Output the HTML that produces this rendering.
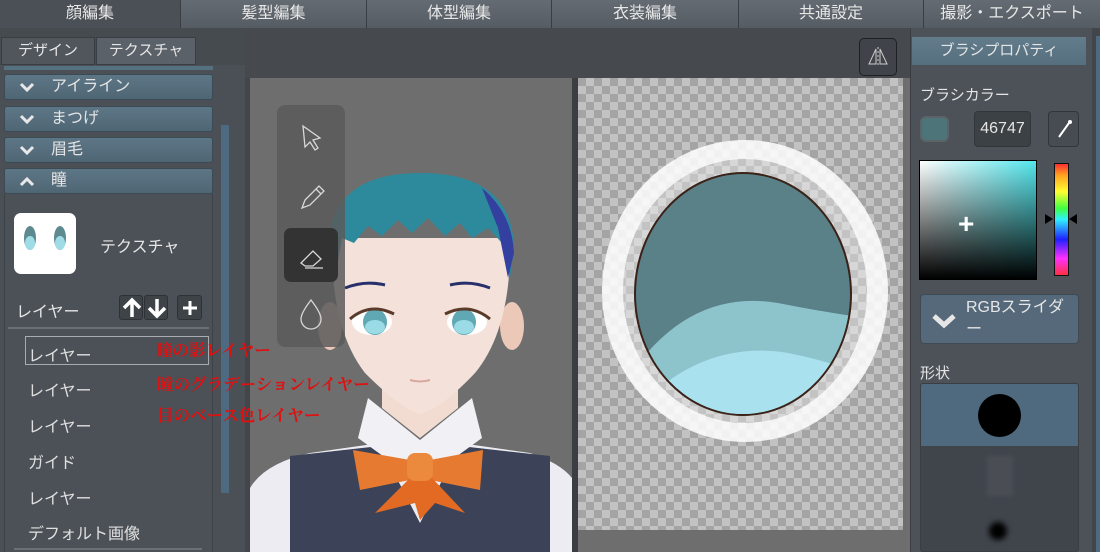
<!DOCTYPE html>
<html><head><meta charset="utf-8"><style>
*{margin:0;padding:0;box-sizing:border-box}
body{width:1100px;height:552px;overflow:hidden;background:#42464b;font-family:"Liberation Sans","Noto Sans CJK JP",sans-serif;color:#e6e6e6;position:relative}
.a{position:absolute}
.tab{position:absolute;top:0;height:28px;background:linear-gradient(#646b72,#565c63);border-right:1px solid #3a3e42;text-align:center;font-size:16px;line-height:28px;color:#e8e8e8}
.sec{position:absolute;left:4px;width:209px;height:26px;background:linear-gradient(#5d7686,#4f6674);border:1px solid #3b4a54;border-radius:3px;font-size:16px;line-height:24px;color:#e4e4e4}
.sec svg{position:absolute;left:14px;top:7px}
.sec span{position:absolute;left:46px}
.li{position:absolute;left:28px;font-size:16px;color:#e0e0e0}
.red{position:absolute;font-size:16.5px;line-height:18px;color:#e01010;font-weight:bold;font-family:"Liberation Serif","Noto Serif CJK SC",serif;white-space:nowrap}
</style></head><body>
<div class="tab" style="left:0;width:181px;background:#4b5056">顔編集</div>
<div class="tab" style="left:181px;width:186px">髪型編集</div>
<div class="tab" style="left:367px;width:185px">体型編集</div>
<div class="tab" style="left:552px;width:187px">衣装編集</div>
<div class="tab" style="left:739px;width:185px">共通設定</div>
<div class="tab" style="left:924px;width:176px;border-right:0">撮影・エクスポート</div>

<div class="a" style="left:0;top:28px;width:245px;height:524px;background:#464b50"></div>
<div class="a" style="left:1px;top:37px;width:94px;height:28px;background:#50565c;border:1px solid #3a3e42;font-size:15px;line-height:26px;text-align:center">デザイン</div>
<div class="a" style="left:96px;top:37px;width:100px;height:28px;background:#5a6168;border:1px solid #3a3e42;font-size:15px;line-height:26px;text-align:center">テクスチャ</div>
<div class="a" style="left:0;top:65px;width:245px;height:487px;background:#4a5056"></div>
<div class="a" style="left:4px;top:66px;width:209px;height:4px;background:#55707f"></div>
<div class="a" style="left:221px;top:125px;width:8px;height:368px;background:#4e6a80"></div>
<div class="sec" style="top:74px"><svg width="16" height="12"><path d="M2 2l6 6 6-6" stroke="#e8e8e8" stroke-width="3" fill="none"/></svg><span>アイライン</span></div>
<div class="sec" style="top:106px"><svg width="16" height="12"><path d="M2 2l6 6 6-6" stroke="#e8e8e8" stroke-width="3" fill="none"/></svg><span>まつげ</span></div>
<div class="sec" style="top:137px"><svg width="16" height="12"><path d="M2 2l6 6 6-6" stroke="#e8e8e8" stroke-width="3" fill="none"/></svg><span>眉毛</span></div>
<div class="sec" style="top:168px"><svg width="16" height="12"><path d="M2 9l6-6 6 6" stroke="#e8e8e8" stroke-width="3" fill="none"/></svg><span>瞳</span></div>
<div class="a" style="left:4px;top:194px;width:209px;height:358px;border-left:1px solid #3d4247;border-right:1px solid #3d4247;background:#4b5157"></div>
<div class="a" style="left:14px;top:213px;width:62px;height:61px;background:#fff;border-radius:7px">
<svg width="62" height="61"><ellipse cx="16" cy="25" rx="6" ry="12" fill="#5d8a8f"/><ellipse cx="16" cy="30" rx="5" ry="7" fill="#9fdce6"/><ellipse cx="46" cy="25" rx="6" ry="12" fill="#5d8a8f"/><ellipse cx="46" cy="30" rx="5" ry="7" fill="#9fdce6"/></svg></div>
<div class="a" style="left:100px;top:233px;font-size:16px">テクスチャ</div>
<div class="a" style="left:16px;top:298px;font-size:16px">レイヤー</div>
<div class="a" style="left:119px;top:295px;width:24px;height:25px;background:#3e4348;border:1px solid #2e3236;border-radius:3px"><svg width="24" height="24"><path d="M12 21V5M4 12l8-8 8 8" stroke="#fff" stroke-width="3.5" fill="none"/></svg></div>
<div class="a" style="left:144px;top:295px;width:24px;height:25px;background:#3e4348;border:1px solid #2e3236;border-radius:3px"><svg width="24" height="24"><path d="M12 3v16M4 12l8 8 8-8" stroke="#fff" stroke-width="3.5" fill="none"/></svg></div>
<div class="a" style="left:177px;top:295px;width:25px;height:25px;background:#3e4348;border:1px solid #2e3236;border-radius:3px"><svg width="24" height="24"><path d="M12 5v14M5 12h14" stroke="#fff" stroke-width="3" fill="none"/></svg></div>
<div class="a" style="left:8px;top:327px;width:201px;height:2px;background:#6a7076"></div>
<div class="a" style="left:25px;top:336px;width:184px;height:29px;border:1px solid #a8acb0"></div>
<div class="li" style="top:342px">レイヤー</div>
<div class="li" style="top:377px">レイヤー</div>
<div class="li" style="top:413px">レイヤー</div>
<div class="li" style="top:449px">ガイド</div>
<div class="li" style="top:485px">レイヤー</div>
<div class="li" style="top:520px">デフォルト画像</div>
<div class="a" style="left:14px;top:548px;width:188px;height:2px;background:#6a7076"></div>

<div class="a" style="left:245px;top:28px;width:665px;height:50px;background:#464a4f"></div>
<div class="a" style="left:859px;top:38px;width:38px;height:38px;border:1.5px solid #1e2124;border-radius:5px;background:#40444a"><svg width="36" height="36"><path d="M16 10L9 25h7zM20 10l7 15h-7z" stroke="#ccc" stroke-width="1" fill="none"/><path d="M18 8v20" stroke="#ccc" stroke-dasharray="2 2"/></svg></div>

<svg class="a" style="left:250px;top:78px" width="322" height="474">
<rect width="322" height="474" fill="#6e6e6e"/>
<!-- shirt/body -->
<path d="M0 474V410Q15 385 60 375L130 365 210 365 280 375Q310 385 322 400V474Z" fill="#ececf2"/>
<path d="M40 474V378L130 368 170 445 210 368 300 378V474Z" fill="#3c4358"/>
<path d="M118 320L170 362 222 320 232 360 170 405 108 360Z" fill="#f0f0f5"/>
<!-- neck -->
<path d="M132 290H208V330L170 360 132 330Z" fill="#f2dcd2"/>
<!-- bow -->
<path d="M103 372L160 382 170 392 180 382 233 372 230 412 180 402 160 402 110 412Z" fill="#e67a30"/>
<path d="M160 400L125 435 165 425 170 442 185 425 215 435 182 400Z" fill="#e26a22"/>
<rect x="157" y="375" width="26" height="28" rx="8" fill="#eb8a3c"/>
<!-- ears -->
<ellipse cx="80" cy="248" rx="12" ry="24" fill="#ecc8b8"/>
<ellipse cx="262" cy="248" rx="12" ry="24" fill="#ecc8b8"/>
<!-- face -->
<path d="M82 160Q80 250 115 295Q150 330 170 336Q192 330 225 295Q262 250 260 160Z" fill="#f4e2da"/>
<!-- hair -->
<path d="M78 170Q80 95 170 95Q262 95 264 170L260 200 252 165 238 150 222 160 210 145 195 158 178 140 162 155 148 142 132 158 118 148 104 165 92 160 84 205Z" fill="#2d8a9c"/>
<path d="M232 110Q262 135 264 175L258 200 248 150Z" fill="#3440a0"/>
<!-- brows -->
<path d="M95 210Q115 202 135 207" stroke="#27306a" stroke-width="3" fill="none"/>
<path d="M200 207Q220 202 240 210" stroke="#27306a" stroke-width="3" fill="none"/>
<!-- eyes -->
<ellipse cx="122" cy="244" rx="20" ry="13" fill="#fff"/><ellipse cx="125" cy="244" rx="12" ry="13" fill="#5fa8b4"/><ellipse cx="125" cy="249" rx="10" ry="7" fill="#9adbe6"/>
<path d="M100 241Q120 224 144 236" stroke="#5a3a2a" stroke-width="3" fill="none"/>
<ellipse cx="217" cy="244" rx="20" ry="13" fill="#fff"/><ellipse cx="214" cy="244" rx="12" ry="13" fill="#5fa8b4"/><ellipse cx="214" cy="249" rx="10" ry="7" fill="#9adbe6"/>
<path d="M195 236Q219 224 240 241" stroke="#5a3a2a" stroke-width="3" fill="none"/>
<path d="M160 302Q170 305 180 302" stroke="#d8a8a0" stroke-width="2" fill="none"/>
<!-- toolbar -->
<rect x="27" y="27" width="68" height="242" rx="8" fill="#5a5a5a" fill-opacity="0.85"/>
<rect x="34" y="150" width="54" height="54" rx="7" fill="#333"/>
<path d="M53 48l17 12-7 2 5 8-3 2-5-8-5 5z" stroke="#d8d8d8" stroke-width="1.3" fill="none"/>
<path d="M52 130l3-8 14-14 5 5-14 14zM66 111l5 5" stroke="#d8d8d8" stroke-width="1.3" fill="none"/>
<path d="M51 185l12-12 8 8-8 7h-8zM55 190h18" stroke="#d8d8d8" stroke-width="1.3" fill="none"/>
<path d="M61 222q-10 13-10 19a10 10 0 0 0 20 0q0-6-10-19z" stroke="#d8d8d8" stroke-width="1.3" fill="none"/>
</svg>
<div class="red" style="left:156px;top:342px">瞳の影レイヤー</div>
<div class="red" style="left:157px;top:376px">瞳のグラデーションレイヤー</div>
<div class="red" style="left:157px;top:407px">目のベース色レイヤー</div>

<div class="a" style="left:572px;top:78px;width:6px;height:474px;background:#3a3e42"></div>

<svg class="a" style="left:578px;top:78px" width="332" height="474">
<defs><pattern id="ck" width="16" height="16" patternUnits="userSpaceOnUse"><rect width="16" height="16" fill="#c2c2c2"/><rect width="8" height="8" fill="#a4a4a4"/><rect x="8" y="8" width="8" height="8" fill="#a4a4a4"/></pattern>
<clipPath id="ir"><ellipse cx="165" cy="216" rx="107" ry="120"/></clipPath></defs>
<rect width="332" height="474" fill="#6e6e6e"/>
<rect width="325" height="452" fill="url(#ck)"/>
<ellipse cx="167" cy="213" rx="143" ry="151" fill="#fff" fill-opacity="0.85"/>
<ellipse cx="167" cy="213" rx="122" ry="132" fill="url(#ck)" fill-opacity="0.6"/>
<ellipse cx="165" cy="216" rx="109" ry="122" fill="#3a2218"/>
<g clip-path="url(#ir)">
<rect x="50" y="90" width="240" height="260" fill="#5a8088"/>
<path d="M50 300Q110 210 200 225 250 235 290 240V350H50Z" fill="#8dc4cc"/>
<path d="M50 340Q120 260 210 275 260 285 290 300V350H50Z" fill="#a9e1ef"/>
</g>
</svg>

<div class="a" style="left:910px;top:28px;width:182px;height:524px;background:#4c5258;border-left:1px solid #3a3e42"></div>
<div class="a" style="left:1092px;top:28px;width:8px;height:524px;background:#42464b"></div>
<div class="a" style="left:1096px;top:36px;width:4px;height:516px;background:#4e6a80"></div>
<div class="a" style="left:912px;top:37px;width:174px;height:28px;background:linear-gradient(#627c8c,#566f7e);text-align:center;font-size:15px;line-height:28px">ブラシプロパティ</div>
<div class="a" style="left:920px;top:84px;font-size:15px">ブラシカラー</div>
<div class="a" style="left:920px;top:116px;width:29px;height:26px;background:#4d7478;border:2px solid #5c6468;border-radius:6px"></div>
<div class="a" style="left:974px;top:111px;width:57px;height:36px;background:#3c4146;border:1px solid #32363a;border-radius:4px;font-size:16px;line-height:34px;text-align:center">46747</div>
<div class="a" style="left:1048px;top:111px;width:31px;height:36px;background:#474c52;border:1px solid #32363a;border-radius:4px"><svg width="30" height="34"><path d="M10 25l10-14" stroke="#fff" stroke-width="2"/><circle cx="21" cy="10" r="2" fill="#fff"/></svg></div>
<div class="a" style="left:919px;top:160px;width:118px;height:120px;border:1.5px solid #000;background:linear-gradient(to top,#000,rgba(0,0,0,0)),linear-gradient(to right,#fff,#53e6ec)"></div>
<div class="a" style="left:958px;top:212px;font-size:28px;color:#fff;line-height:24px;font-weight:bold">+</div>
<div class="a" style="left:1054px;top:163px;width:15px;height:113px;border:1px solid #111;background:linear-gradient(#ff3030,#ffa020 10%,#ffff30 25%,#40ff40 40%,#30f0ff 50%,#2020ff 68%,#ff30ff 85%,#ff3040)"></div>
<div class="a" style="left:1045px;top:214px;width:0;height:0;border-left:8px solid #000;border-top:5px solid transparent;border-bottom:5px solid transparent"></div>
<div class="a" style="left:1069px;top:214px;width:0;height:0;border-right:8px solid #000;border-top:5px solid transparent;border-bottom:5px solid transparent"></div>
<div class="a" style="left:920px;top:294px;width:159px;height:50px;background:#55697a;border:1px solid #3d4a54;border-radius:4px">
<svg class="a" style="left:9px;top:16px" width="28" height="20"><path d="M4 5l10 9 10-9" stroke="#e6e6e6" stroke-width="5" fill="none"/></svg>
<div class="a" style="left:45px;top:2px;font-size:16px;line-height:22px">RGBスライダ<br>ー</div></div>
<div class="a" style="left:920px;top:362px;font-size:15px">形状</div>
<div class="a" style="left:920px;top:383px;width:159px;height:169px;background:#40454c;border:1px solid #3a3e42;border-radius:3px;overflow:hidden">
<div style="height:62px;background:#4f6a7e;position:relative"><div class="a" style="left:57px;top:10px;width:43px;height:43px;border-radius:50%;background:#000"></div></div>
<div class="a" style="left:66px;top:72px;width:26px;height:40px;background:#4a4e54;filter:blur(2px)"></div>
<div class="a" style="left:68px;top:138px;width:18px;height:18px;border-radius:50%;background:#000;filter:blur(3px)"></div>
</div>
</body></html>
